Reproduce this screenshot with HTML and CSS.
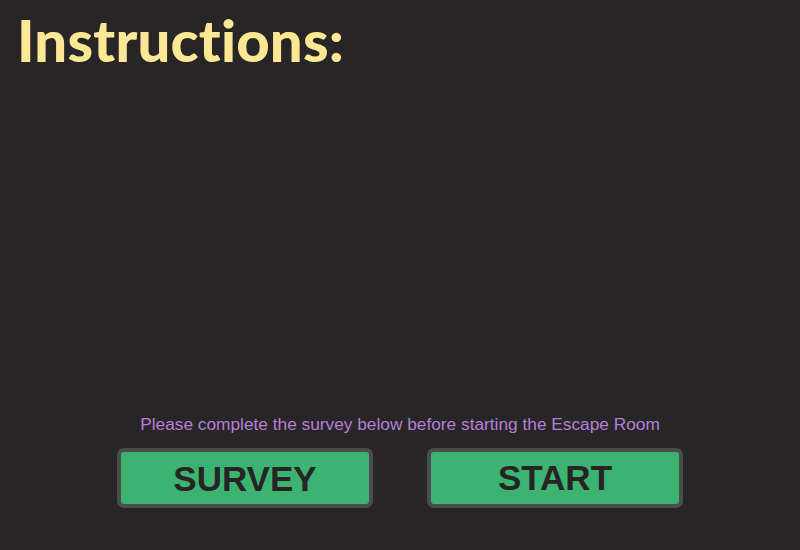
FILE: index.html
```html
<!DOCTYPE html>
<html>
<head>
<meta charset="utf-8">
<link rel="stylesheet" href="styles.css">
</head>
<body>
<div class="page">
  <h1 class="title">Instructions:</h1>
  <div class="spacer"></div>
  <p class="note">Please complete the survey below before starting the Escape Room</p>
  <div class="actions">
    <button class="btn btn-survey">SURVEY</button>
    <button class="btn btn-start">START</button>
  </div>
</div>
</body>
</html>
```
FILE: styles.css
```css
html, body {
  margin: 0;
  padding: 0;
  background: #272526;
}
.page {
  width: 800px;
  height: 550px;
  display: flex;
  flex-direction: column;
  box-sizing: border-box;
}
.title {
  margin: 0;
  padding: 8px 0 0 17px;
  font-family: "Lato", sans-serif;
  font-weight: 900;
  font-size: 58px;
  line-height: 64px;
  color: #fce795;
  letter-spacing: 0.2px;
}
.spacer {
  flex: 1;
}
.note {
  margin: 0 0 14px 0;
  text-align: center;
  font-family: "Liberation Sans", Arial, sans-serif;
  font-size: 17.3px;
  line-height: 20px;
  color: #b57fd8;
}
.actions {
  display: flex;
  justify-content: center;
  gap: 54px;
  margin-bottom: 42px;
}
.btn {
  width: 256px;
  height: 60px;
  box-sizing: border-box;
  border: 4px solid #4d4c4d;
  border-radius: 7px;
  background: #3cb371;
  color: #262425;
  font-family: "Liberation Sans", Arial, sans-serif;
  font-weight: bold;
  font-size: 35px;
  padding: 0;
}
.btn-survey {
  padding-top: 2px;
}
```
